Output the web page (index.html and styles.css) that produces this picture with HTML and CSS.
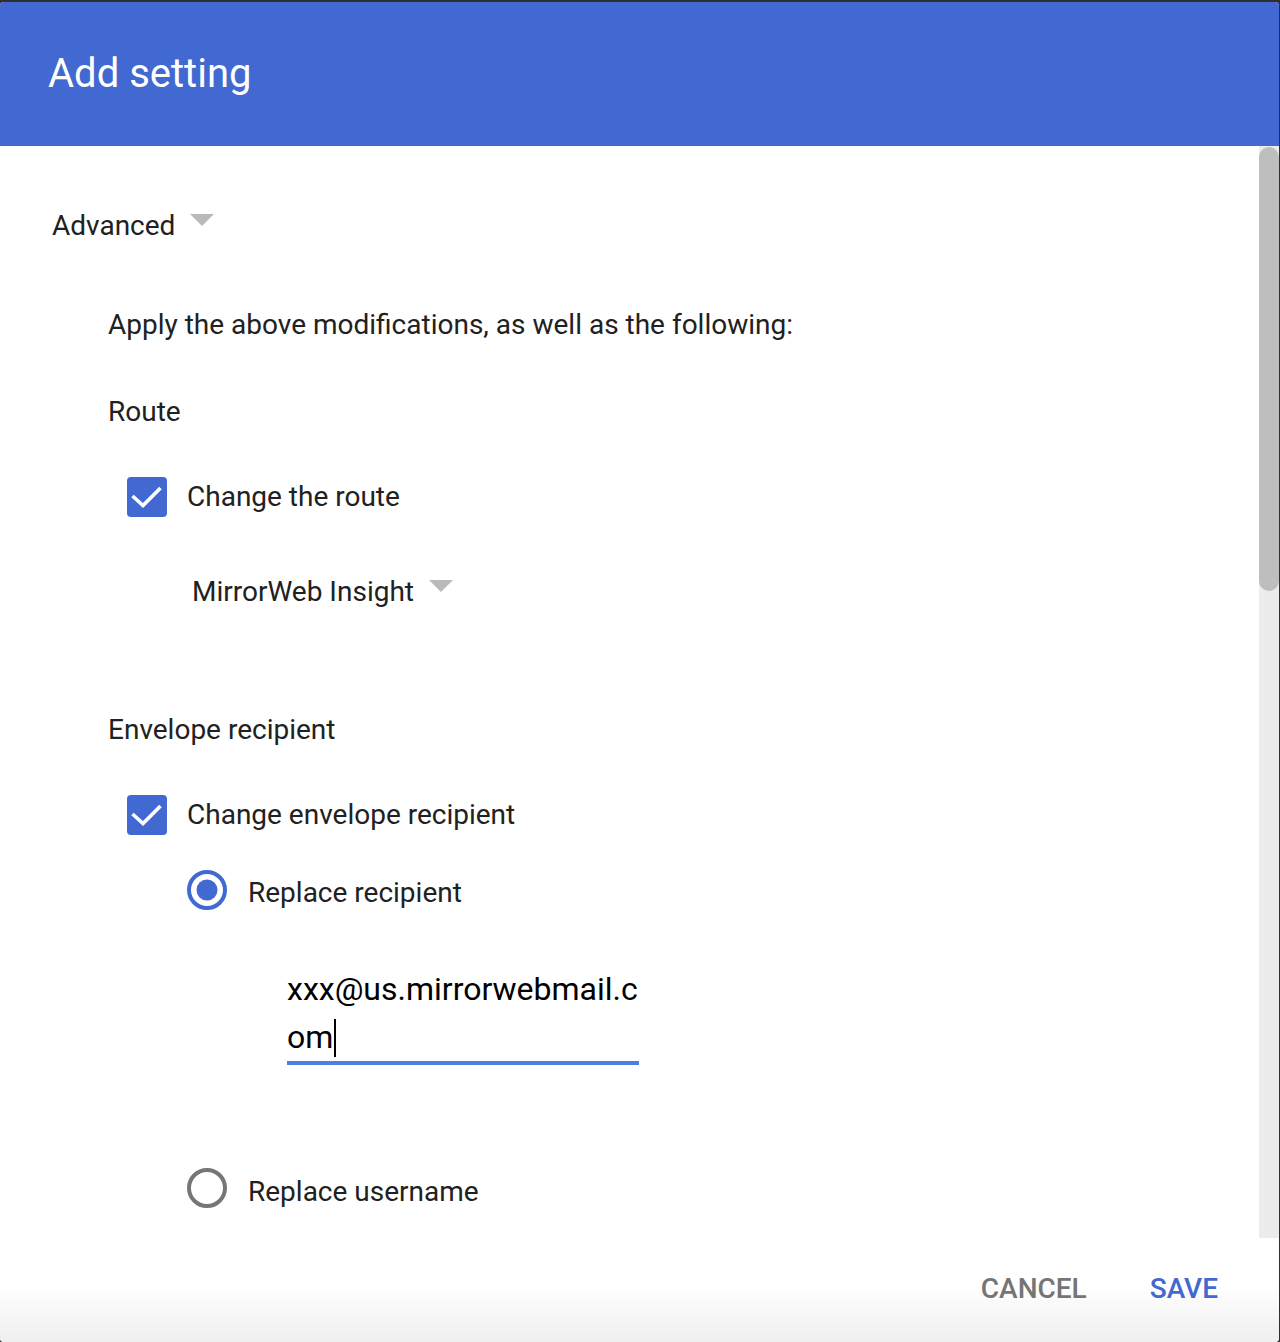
FILE: index.html
```html
<!DOCTYPE html>
<html lang="en">
<head>
<meta charset="utf-8">
<title>Add setting</title>
<link rel="stylesheet" href="styles.css">
</head>
<body>
<div class="dialog">
  <header class="dlg-header">
    <h1 class="dlg-title">Add setting</h1>
  </header>
  <div class="dlg-body">
    <div class="dlg-scroll">
      <div class="dropdown advanced">
        <span class="dd-label">Advanced</span>
        <span class="dd-arrow"></span>
      </div>
      <p class="text intro">Apply the above modifications, as well as the following:</p>
      <p class="text section-route">Route</p>
      <div class="check-row row-route">
        <span class="checkbox">
          <svg viewBox="0 0 40 40" width="40" height="40"><path d="M5.5 19 L16 28.5 L33.5 11" fill="none" stroke="#fff" stroke-width="3.6"/></svg>
        </span>
        <span class="check-label">Change the route</span>
      </div>
      <div class="dropdown route-select">
        <span class="dd-label">MirrorWeb Insight</span>
        <span class="dd-arrow"></span>
      </div>
      <p class="text section-env">Envelope recipient</p>
      <div class="check-row row-env">
        <span class="checkbox">
          <svg viewBox="0 0 40 40" width="40" height="40"><path d="M5.5 19 L16 28.5 L33.5 11" fill="none" stroke="#fff" stroke-width="3.6"/></svg>
        </span>
        <span class="check-label">Change envelope recipient</span>
      </div>
      <div class="radio-row radio-first">
        <span class="radio">
          <svg viewBox="0 0 40 40" width="40" height="40"><circle cx="20" cy="20" r="18" fill="none" stroke="#4169d1" stroke-width="4"/><circle cx="20" cy="20" r="10.5" fill="#4169d1"/></svg>
        </span>
        <span class="radio-label">Replace recipient</span>
      </div>
      <div class="field">
        <div class="field-line">xxx@us.mirrorwebmail.c</div>
        <div class="field-line">om<span class="caret"></span></div>
      </div>
      <div class="radio-row radio-second">
        <span class="radio">
          <svg viewBox="0 0 40 40" width="40" height="40"><circle cx="20" cy="20" r="18" fill="none" stroke="#767676" stroke-width="4"/></svg>
        </span>
        <span class="radio-label">Replace username</span>
      </div>
    </div>
    <div class="scrollbar">
      <div class="scroll-thumb"></div>
    </div>
  </div>
  <footer class="dlg-footer">
    <button class="btn btn-cancel">CANCEL</button>
    <button class="btn btn-save">SAVE</button>
  </footer>
</div>
</body>
</html>
```
FILE: styles.css
```css
html, body {
  margin: 0;
  padding: 0;
}
body {
  background: #2f2f2f;
  font-family: Roboto, "Noto Sans", "Liberation Sans", sans-serif;
  color: #212121;
  height: 1342px;
  overflow: hidden;
}
.dialog {
  margin-top: 2px;
  width: 1279px;
  height: 1340px;
  background: #fff;
  border-radius: 4px;
  overflow: hidden;
  display: flex;
  flex-direction: column;
}
.dlg-header {
  height: 144px;
  flex: none;
  background: #4169d1;
  box-sizing: border-box;
  padding: 48px 48px 0;
}
.dlg-title {
  margin: 0;
  font-size: 40px;
  line-height: 48px;
  font-weight: 400;
  color: #fff;
}
.dlg-body {
  height: 1092px;
  flex: none;
  display: flex;
  overflow: hidden;
}
.dlg-scroll {
  flex: 1;
  overflow: hidden;
}
.scrollbar {
  width: 20px;
  flex: none;
  background: #ececec;
}
.scroll-thumb {
  height: 444px;
  margin-top: 1px;
  background: #bebebe;
  border-radius: 10px;
}
.text {
  margin: 0;
  font-size: 28px;
  line-height: 36px;
}
.dropdown {
  display: flex;
  align-items: flex-start;
  font-size: 28px;
  line-height: 36px;
}
.dd-arrow {
  width: 0;
  height: 0;
  border-left: 12px solid transparent;
  border-right: 12px solid transparent;
  border-top: 12px solid #bababa;
  margin-left: 15px;
}
.advanced {
  margin-top: 62px;
  margin-left: 52px;
}
.advanced .dd-arrow {
  margin-top: 6px;
}
.intro {
  margin-top: 63px;
  margin-left: 108px;
}
.section-route {
  margin-top: 51px;
  margin-left: 108px;
}
.check-row {
  display: flex;
  align-items: center;
  height: 40px;
  margin-left: 127px;
}
.checkbox {
  width: 40px;
  height: 40px;
  border-radius: 4px;
  background: #4169d1;
  display: block;
  flex: none;
}
.checkbox svg {
  display: block;
}
.check-label {
  font-size: 28px;
  line-height: 40px;
  margin-left: 20px;
}
.row-route {
  margin-top: 47px;
}
.route-select {
  margin-top: 57px;
  margin-left: 192px;
}
.route-select .dd-arrow {
  margin-top: 6px;
}
.section-env {
  margin-top: 102px;
  margin-left: 108px;
}
.row-env {
  margin-top: 47px;
}
.radio-row {
  display: flex;
  align-items: flex-start;
  margin-left: 187px;
}
.radio {
  width: 40px;
  height: 40px;
  flex: none;
}
.radio svg {
  display: block;
}
.radio-label {
  font-size: 28px;
  line-height: 46px;
  margin-left: 21px;
}
.radio-first {
  margin-top: 35px;
}
.field {
  margin-top: 49px;
  margin-left: 287px;
  width: 352px;
  border-bottom: 4px solid #4d7fe2;
  font-size: 32px;
  line-height: 48px;
  color: #000;
}
.field-line {
  white-space: nowrap;
}
.caret {
  display: inline-block;
  width: 2px;
  height: 38px;
  background: #000;
  vertical-align: -9px;
  margin-left: 1px;
}
.radio-second {
  margin-top: 103px;
}
.radio-second .radio-label {
  line-height: 48px;
}
.dlg-footer {
  flex: 1;
  background: linear-gradient(to bottom, #ffffff 45%, #efefef 100%);
  display: flex;
  justify-content: flex-end;
  align-items: flex-start;
  padding: 33px 61px 0 0;
  gap: 63px;
}
.btn {
  border: none;
  background: none;
  padding: 0;
  margin: 0;
  font-family: Roboto, "Noto Sans", "Liberation Sans", sans-serif;
  font-size: 28px;
  line-height: 36px;
  font-weight: 500;
  letter-spacing: 0;
}
.btn-cancel {
  color: #757575;
}
.btn-save {
  color: #4169d1;
}
```
